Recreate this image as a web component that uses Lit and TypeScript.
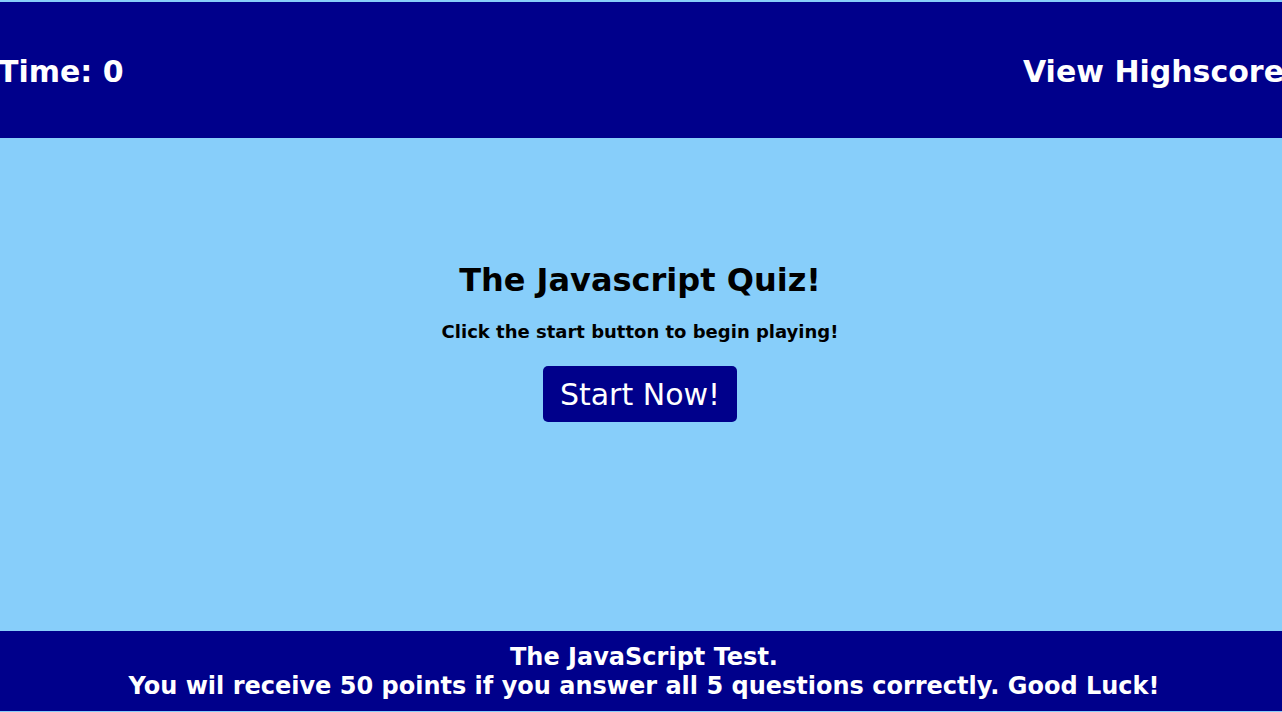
import { LitElement, html, css } from "lit";
import { customElement, state } from "lit/decorators.js";

@customElement("app-root")
export class AppRoot extends LitElement {
  @state() private time = 0;

  static styles = css`
    :host {
      display: flex;
      flex-direction: column;
      box-sizing: border-box;
      min-height: 100vh;
      padding: 2px 0 1px;
      background: lightskyblue;
      color: black;
      font-family: Verdana, "DejaVu Sans", sans-serif;
      overflow-x: hidden;
    }
    .bar {
      display: flex;
      align-items: center;
      justify-content: space-between;
      margin: 0 -2px;
      padding: 52px 0 48px;
      background: darkblue;
      color: white;
      font-size: 30px;
      line-height: 36px;
      font-weight: bold;
    }
    .bar a {
      color: inherit;
      text-decoration: none;
    }
    main {
      flex: 1;
      display: flex;
      flex-direction: column;
      align-items: center;
      padding: 122px 2px 0 0;
      text-align: center;
    }
    h1 {
      margin: 0 0 20px;
      font-size: 32px;
      line-height: 40px;
    }
    p {
      margin: 0 0 22px;
      font-size: 18px;
      line-height: 24px;
      font-weight: bold;
    }
    button {
      padding: 11px 17px 9px;
      border: 0;
      border-radius: 5px;
      background: darkblue;
      color: white;
      font: 30px/36px Verdana, "DejaVu Sans", sans-serif;
      cursor: pointer;
    }
    footer {
      padding: 12px 0 10px 6px;
      background: darkblue;
      color: white;
      font-size: 24px;
      line-height: 29px;
      font-weight: bold;
      text-align: center;
    }
  `;

  render() {
    return html`
      <header class="bar">
        <span>Time: ${this.time}</span>
        <a href="#highscore">View Highscore</a>
      </header>
      <main>
        <h1>The Javascript Quiz!</h1>
        <p>Click the start button to begin playing!</p>
        <button type="button">Start Now!</button>
      </main>
      <footer>
        The JavaScript Test.<br />
        You wil receive 50 points if you answer all 5 questions correctly. Good Luck!
      </footer>
    `;
  }
}
